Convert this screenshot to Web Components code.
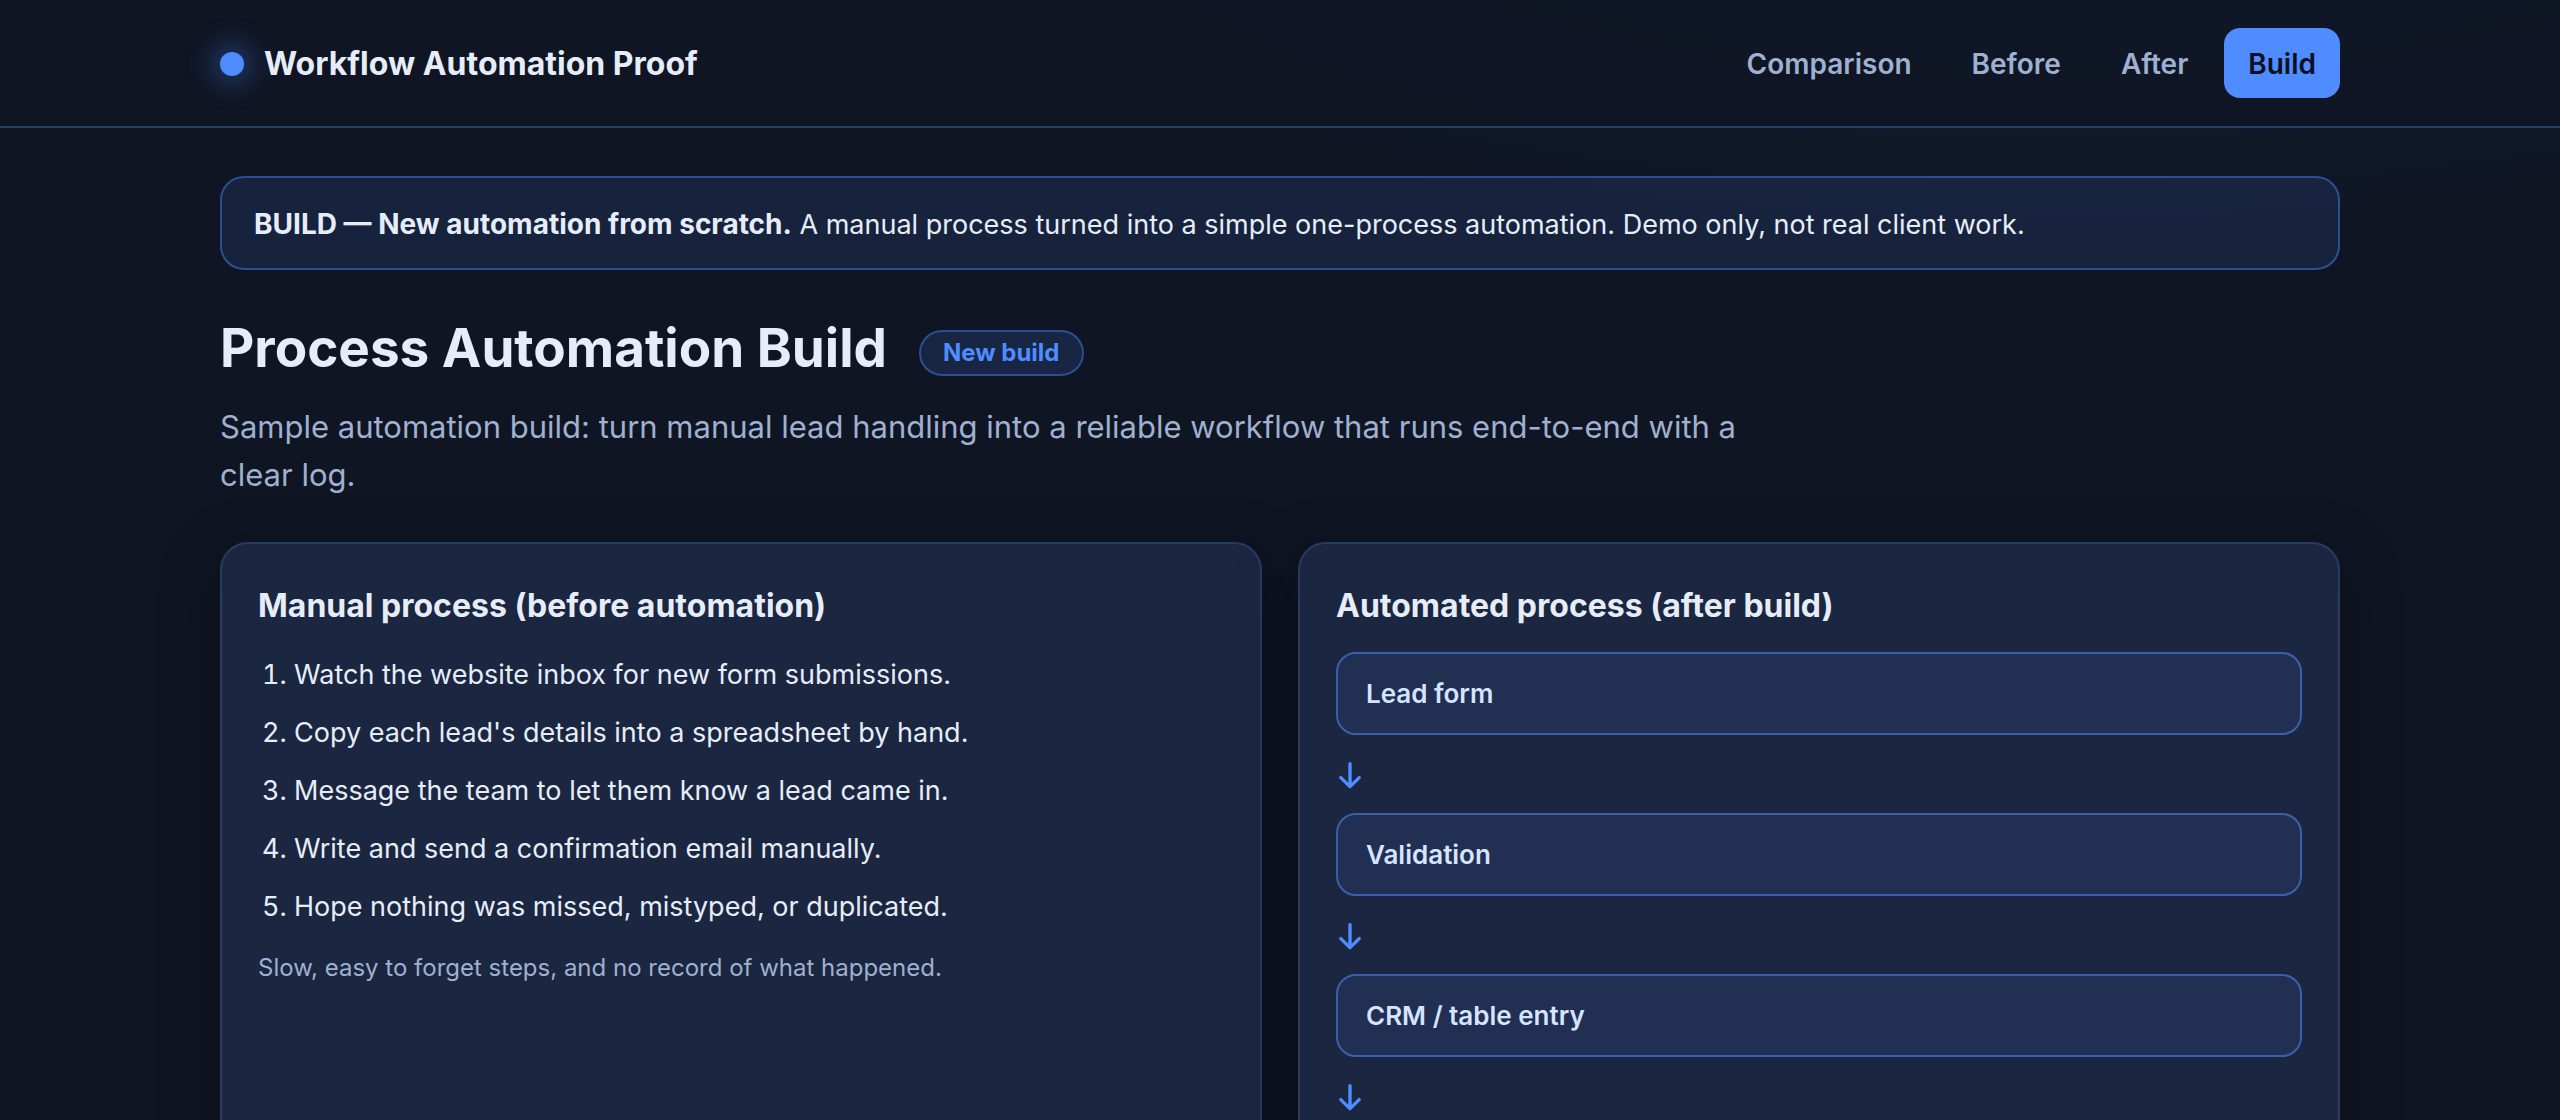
<!DOCTYPE html>
<html lang="en">
<head>
<meta charset="utf-8">
<title>Process Automation Build</title>
<style>
  html { background: #0f1523; scrollbar-width: none; }
  body {
    margin: 0;
    min-height: 100vh;
    background: radial-gradient(2000px 600px at 80% -10%, #15223a 0%, rgba(21, 34, 58, 0) 60%) no-repeat, #0f1523;
    color: #e6edf9;
    font: 27px/46px Inter, "Liberation Sans", sans-serif;
  }
</style>
</head>
<body>
<proof-page></proof-page>
<script>
  const define = (name, html) => {
    const template = document.createElement('template');
    template.innerHTML = html;
    customElements.define(name, class extends HTMLElement {
      constructor() {
        super();
        this.attachShadow({ mode: 'open' }).append(template.content.cloneNode(true));
      }
    });
  };

  define('site-header', `
    <style>
      :host { display: block; background: rgba(15, 21, 35, .85); border-bottom: 2px solid #2a3a63; }
      .bar { max-width: 2120px; margin: 0 auto; padding: 28px 40px; display: flex; align-items: center; justify-content: space-between; }
      .brand { display: flex; align-items: center; gap: 20px; padding-top: 2px; font-size: 32px; font-weight: 700; }
      .dot { width: 24px; height: 24px; border-radius: 50%; background: #4f8cff; box-shadow: 0 0 32px rgba(79, 140, 255, .9); }
      nav { display: flex; gap: 12px; }
    </style>
    <header class="bar">
      <div class="brand"><span class="dot"></span><slot name="brand"></slot></div>
      <nav><slot></slot></nav>
    </header>`);

  define('nav-link', `
    <style>
      :host { display: block; }
      a { display: block; padding: 13px 24px 11px; border-radius: 16px; color: #9fb0d0; font-size: 28px; font-weight: 600; text-decoration: none; }
      :host([current]) a { background: #4f8cff; color: #0b1020; }
    </style>
    <a href="#"><slot></slot></a>`);

  define('info-banner', `
    <style>
      :host { display: block; padding: 24px 32px 20px; border: 2px solid #2b4f92; border-radius: 24px; background: rgba(79, 140, 255, .12); }
      ::slotted(strong) { font-size: 28px; line-height: 1; }
    </style>
    <slot></slot>`);

  define('status-badge', `
    <style>
      :host { display: block; padding: 4px 22px; border: 2px solid #2b4f92; border-radius: 23px; background: rgba(79, 140, 255, .15); color: #4f8cff; font-size: 24px; line-height: 34px; font-weight: 700; }
    </style>
    <slot></slot>`);

  define('page-intro', `
    <style>
      :host { display: block; }
      .row { display: flex; align-items: flex-end; gap: 32px; }
      h1 { margin: 0; font-size: 53px; line-height: 56px; font-weight: 700; }
      .lead { margin: 27px 0 0; max-width: 1520px; color: #9fb0d0; font-size: 31px; line-height: 48px; }
    </style>
    <div class="row"><h1><slot name="title"></slot></h1><slot name="badge"></slot></div>
    <p class="lead"><slot></slot></p>`);

  define('process-card', `
    <style>
      :host { display: block; padding: 36px; border: 2px solid #2a3a63; border-radius: 28px; background: #1b2640; box-shadow: 0 16px 60px rgba(0, 0, 0, .35); }
      h2 { margin: 0 0 20px; font-size: 32px; line-height: 52px; font-weight: 700; }
    </style>
    <h2><slot name="title"></slot></h2>
    <slot></slot>`);

  define('manual-steps', `
    <style>
      :host { display: block; }
      ol { margin: 0; padding-left: 36px; }
      li { margin-bottom: 12px; }
      p { margin: 18px 0 0; color: #9fb0d0; font-size: 24px; line-height: 40px; }
    </style>
    <ol>
      <li>Watch the website inbox for new form submissions.</li>
      <li>Copy each lead's details into a spreadsheet by hand.</li>
      <li>Message the team to let them know a lead came in.</li>
      <li>Write and send a confirmation email manually.</li>
      <li>Hope nothing was missed, mistyped, or duplicated.</li>
    </ol>
    <p><slot></slot></p>`);

  define('flow-step', `
    <style>
      :host { display: block; }
      .box { padding: 18px 28px; border: 2px solid #3960ac; border-radius: 20px; background: #212f52; color: #d6e4ff; font-size: 26px; line-height: 43px; font-weight: 600; }
      svg { display: block; width: 28px; height: 78px; fill: none; stroke: #4f8cff; stroke-linecap: round; stroke-linejoin: round; }
    </style>
    <div class="box"><slot></slot></div>
    <svg viewBox="0 0 28 78" stroke-width="3.4" aria-hidden="true"><path d="M14 28.7V51M4.8 42.6L14 51.6L23.2 42.6"/></svg>`);

  define('proof-page', `
    <style>
      :host { display: block; }
      main { max-width: 2120px; margin: 0 auto; padding: 48px 40px 80px; }
      page-intro { margin-top: 50px; }
      .cards { display: grid; grid-template-columns: 1fr 1fr; gap: 36px; margin-top: 43px; }
    </style>
    <site-header>
      <span slot="brand">Workflow Automation Proof</span>
      <nav-link>Comparison</nav-link>
      <nav-link>Before</nav-link>
      <nav-link>After</nav-link>
      <nav-link current>Build</nav-link>
    </site-header>
    <main>
      <info-banner><strong>BUILD — New automation from scratch.</strong> A manual process turned into a simple one-process automation. Demo only, not real client work.</info-banner>
      <page-intro>
        <span slot="title">Process Automation Build</span>
        <status-badge slot="badge">New build</status-badge>
        Sample automation build: turn manual lead handling into a reliable workflow that runs end-to-end with a clear log.
      </page-intro>
      <div class="cards">
        <process-card>
          <span slot="title">Manual process (before automation)</span>
          <manual-steps>Slow, easy to forget steps, and no record of what happened.</manual-steps>
        </process-card>
        <process-card>
          <span slot="title">Automated process (after build)</span>
          <flow-step>Lead form</flow-step>
          <flow-step>Validation</flow-step>
          <flow-step>CRM / table entry</flow-step>
        </process-card>
      </div>
    </main>`);
</script>
</body>
</html>
